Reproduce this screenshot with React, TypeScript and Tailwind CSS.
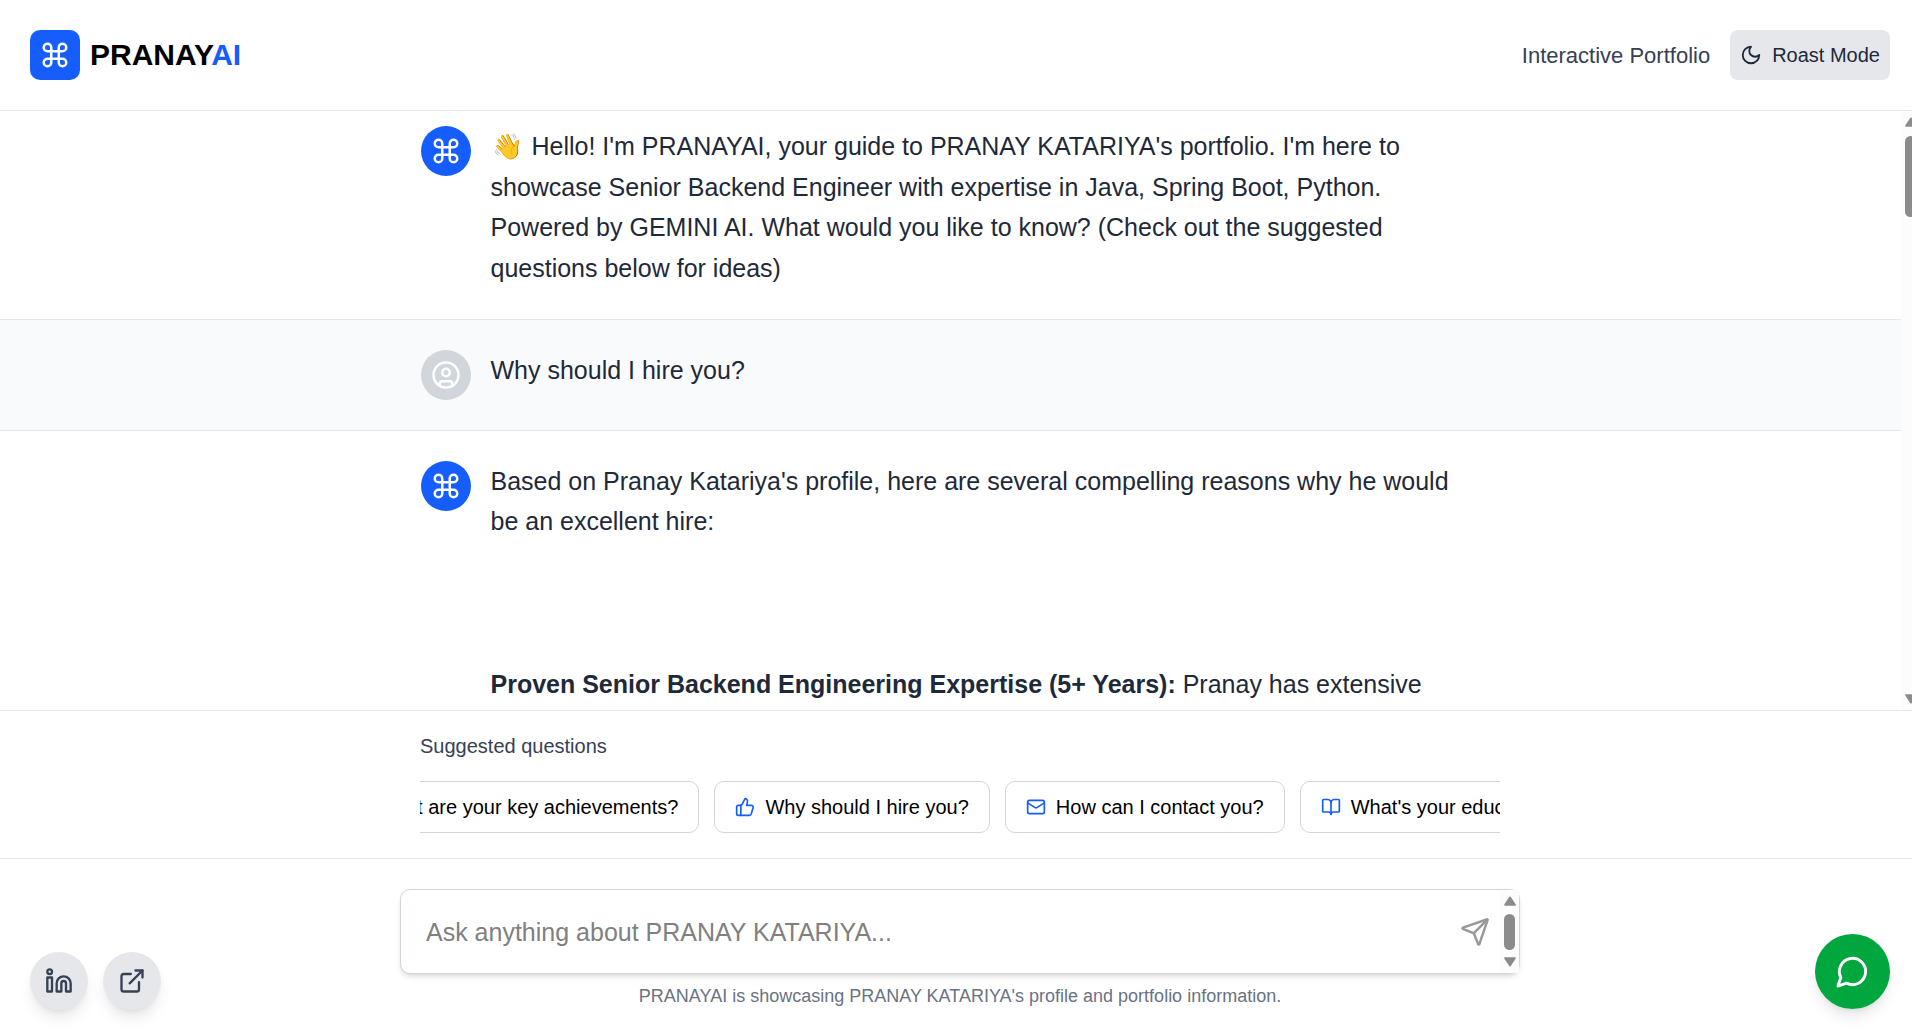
import { useState } from "react";
import type { ComponentType, ReactNode } from "react";
import { BookOpen, CircleUser, Command, ExternalLink, Linkedin, Mail, Send, ThumbsUp, Trophy } from "lucide-react";

type Icon = ComponentType<{ size?: number; className?: string }>;

const suggestions: { icon: Icon; text: string }[] = [
  { icon: Trophy, text: "What are your key achievements?" },
  { icon: ThumbsUp, text: "Why should I hire you?" },
  { icon: Mail, text: "How can I contact you?" },
  { icon: BookOpen, text: "What's your educational background?" },
];

function StrokeIcon({ size, d }: { size: number; d: string }) {
  return (
    <svg width={size} height={size} viewBox="0 0 24 24" fill="none" stroke="currentColor" strokeWidth="2" strokeLinecap="round" strokeLinejoin="round" aria-hidden="true">
      <path d={d} />
    </svg>
  );
}

function Arrow({ down = false }: { down?: boolean }) {
  return (
    <svg viewBox="0 0 12 10" className={down ? "h-[10px] w-3 rotate-180" : "h-[10px] w-3"} fill="#8b8b8b" stroke="#8b8b8b" strokeWidth="2" strokeLinejoin="round" aria-hidden="true">
      <path d="M6 1.5 10.8 8.8H1.2Z" />
    </svg>
  );
}

function Message({ from, first = false, children }: { from: "user" | "ai"; first?: boolean; children: ReactNode }) {
  const user = from === "user";
  return (
    <article className={`border-b border-gray-200 pb-[30px] ${first ? "pt-[15px]" : "pt-[30px]"} ${user ? "bg-gray-50" : "bg-white"}`}>
      <div className="mx-auto flex max-w-[1120px] gap-5 px-[30px]">
        <div className={`flex size-[50px] shrink-0 items-center justify-center rounded-full text-white ${user ? "bg-gray-300" : "bg-blue-600"}`}>
          {user ? <CircleUser size={30} /> : <Command size={30} />}
        </div>
        <div className="min-w-0 flex-1 text-[25px] leading-relaxed text-gray-800">{children}</div>
      </div>
    </article>
  );
}

export default function App() {
  const [question, setQuestion] = useState("");
  return (
    <div className="h-screen overflow-hidden bg-white font-['Liberation_Sans',Arial,sans-serif] text-black">
      <div className="relative -mr-2 flex h-full flex-col">
        <header className="flex items-center justify-between border-b border-gray-200 p-[30px]">
          <div className="flex items-center gap-[10px]">
            <div className="flex size-[50px] items-center justify-center rounded-[10px] bg-blue-600 text-white">
              <Command size={30} />
            </div>
            <h1 className="text-[30px] leading-9 font-bold">
              PRANAY<span className="text-blue-600">AI</span>
            </h1>
          </div>
          <div className="flex items-center gap-5">
            <span className="text-[22px] text-gray-700">Interactive Portfolio</span>
            <button type="button" className="flex h-[50px] items-center gap-[10px] rounded-lg bg-gray-200 px-[10px] text-[20px] text-gray-800">
              <StrokeIcon size={22} d="M12 3a6 6 0 0 0 9 9 9 9 0 1 1-9-9Z" />
              Roast Mode
            </button>
          </div>
        </header>

        <main className="flex min-h-0 flex-1">
          <div className="min-w-0 flex-1 overflow-hidden">
            <Message from="ai" first>
              <p>
                <span className="inline-block w-[34px] text-center">👋</span> Hello! I'm PRANAYAI, your guide to PRANAY KATARIYA's
                portfolio. I'm here to showcase Senior Backend Engineer with expertise in Java, Spring Boot, Python. Powered by GEMINI
                AI. What would you like to know? (Check out the suggested questions below for ideas)
              </p>
            </Message>
            <Message from="user">
              <p>Why should I hire you?</p>
            </Message>
            <Message from="ai">
              <p>Based on Pranay Katariya's profile, here are several compelling reasons why he would be an excellent hire:</p>
              <p className="mt-[122px]">
                <strong>Proven Senior Backend Engineering Expertise (5+ Years):</strong> Pranay has extensive
              </p>
            </Message>
          </div>
          <div className="flex w-[19px] shrink-0 flex-col items-center bg-[#fcfcfc] py-[6px]" aria-hidden="true">
            <Arrow />
            <div className="mt-[9px] mb-auto h-[81px] w-[11px] rounded-full bg-[#8b8b8b]" />
            <Arrow down />
          </div>
        </main>

        <section className="border-y border-gray-200 pt-5 pb-[25px]">
          <div className="mx-auto max-w-[1120px] px-5">
            <h2 className="text-[20px] leading-[30px] text-gray-700">Suggested questions</h2>
            <div className="mt-5 overflow-hidden">
              <div className="-ml-[95px] flex gap-[15px]">
                {suggestions.map(({ icon: Glyph, text }) => (
                  <button key={text} type="button" className="flex shrink-0 items-center gap-[10px] rounded-[10px] border border-gray-300 bg-white px-5 py-[10px] text-[20px] leading-[30px] whitespace-nowrap">
                    <Glyph size={20} className="text-blue-600" />
                    {text}
                  </button>
                ))}
              </div>
            </div>
          </div>
        </section>

        <footer className="px-[30px] pt-[30px] pb-[21px]">
          <form className="mx-auto flex h-[85px] max-w-[1120px] items-center rounded-[10px] border border-gray-300 bg-white pl-[25px] shadow-md" onSubmit={(e) => e.preventDefault()}>
            <textarea
              rows={1}
              aria-label="Ask a question"
              placeholder="Ask anything about PRANAY KATARIYA..."
              value={question}
              onChange={(e) => setQuestion(e.target.value)}
              className="h-10 min-w-0 flex-1 resize-none overflow-hidden text-[25px] leading-10 outline-none placeholder:text-[#808080]"
            />
            <button type="submit" aria-label="Send" className="mr-[10px] text-[#999]">
              <Send size={30} />
            </button>
            <div className="flex h-full w-[19px] flex-col items-center bg-[#fcfcfc] py-[6px]" aria-hidden="true">
              <Arrow />
              <div className="mt-2 mb-auto h-9 w-[11px] rounded-full bg-[#8b8b8b]" />
              <Arrow down />
            </div>
          </form>
          <p className="mt-[10px] text-center text-[18px] leading-[25px] text-gray-500">
            PRANAYAI is showcasing PRANAY KATARIYA's profile and portfolio information.
          </p>
        </footer>

        <nav className="absolute bottom-5 left-[30px] flex gap-[15px] text-gray-700" aria-label="Profile links">
          <a href="#linkedin" aria-label="LinkedIn" className="flex size-[58px] items-center justify-center rounded-full bg-gray-200 shadow-lg">
            <Linkedin size={28} />
          </a>
          <a href="#portfolio" aria-label="Portfolio" className="flex size-[58px] items-center justify-center rounded-full bg-gray-200 shadow-lg">
            <ExternalLink size={28} />
          </a>
        </nav>
        <button type="button" aria-label="Open chat" className="absolute right-[30px] bottom-[21px] flex size-[75px] items-center justify-center rounded-full bg-green-600 text-white shadow-lg">
          <StrokeIcon size={35} d="M7.9 20A9 9 0 1 0 4 16.1L2 22Z" />
        </button>
      </div>
    </div>
  );
}
